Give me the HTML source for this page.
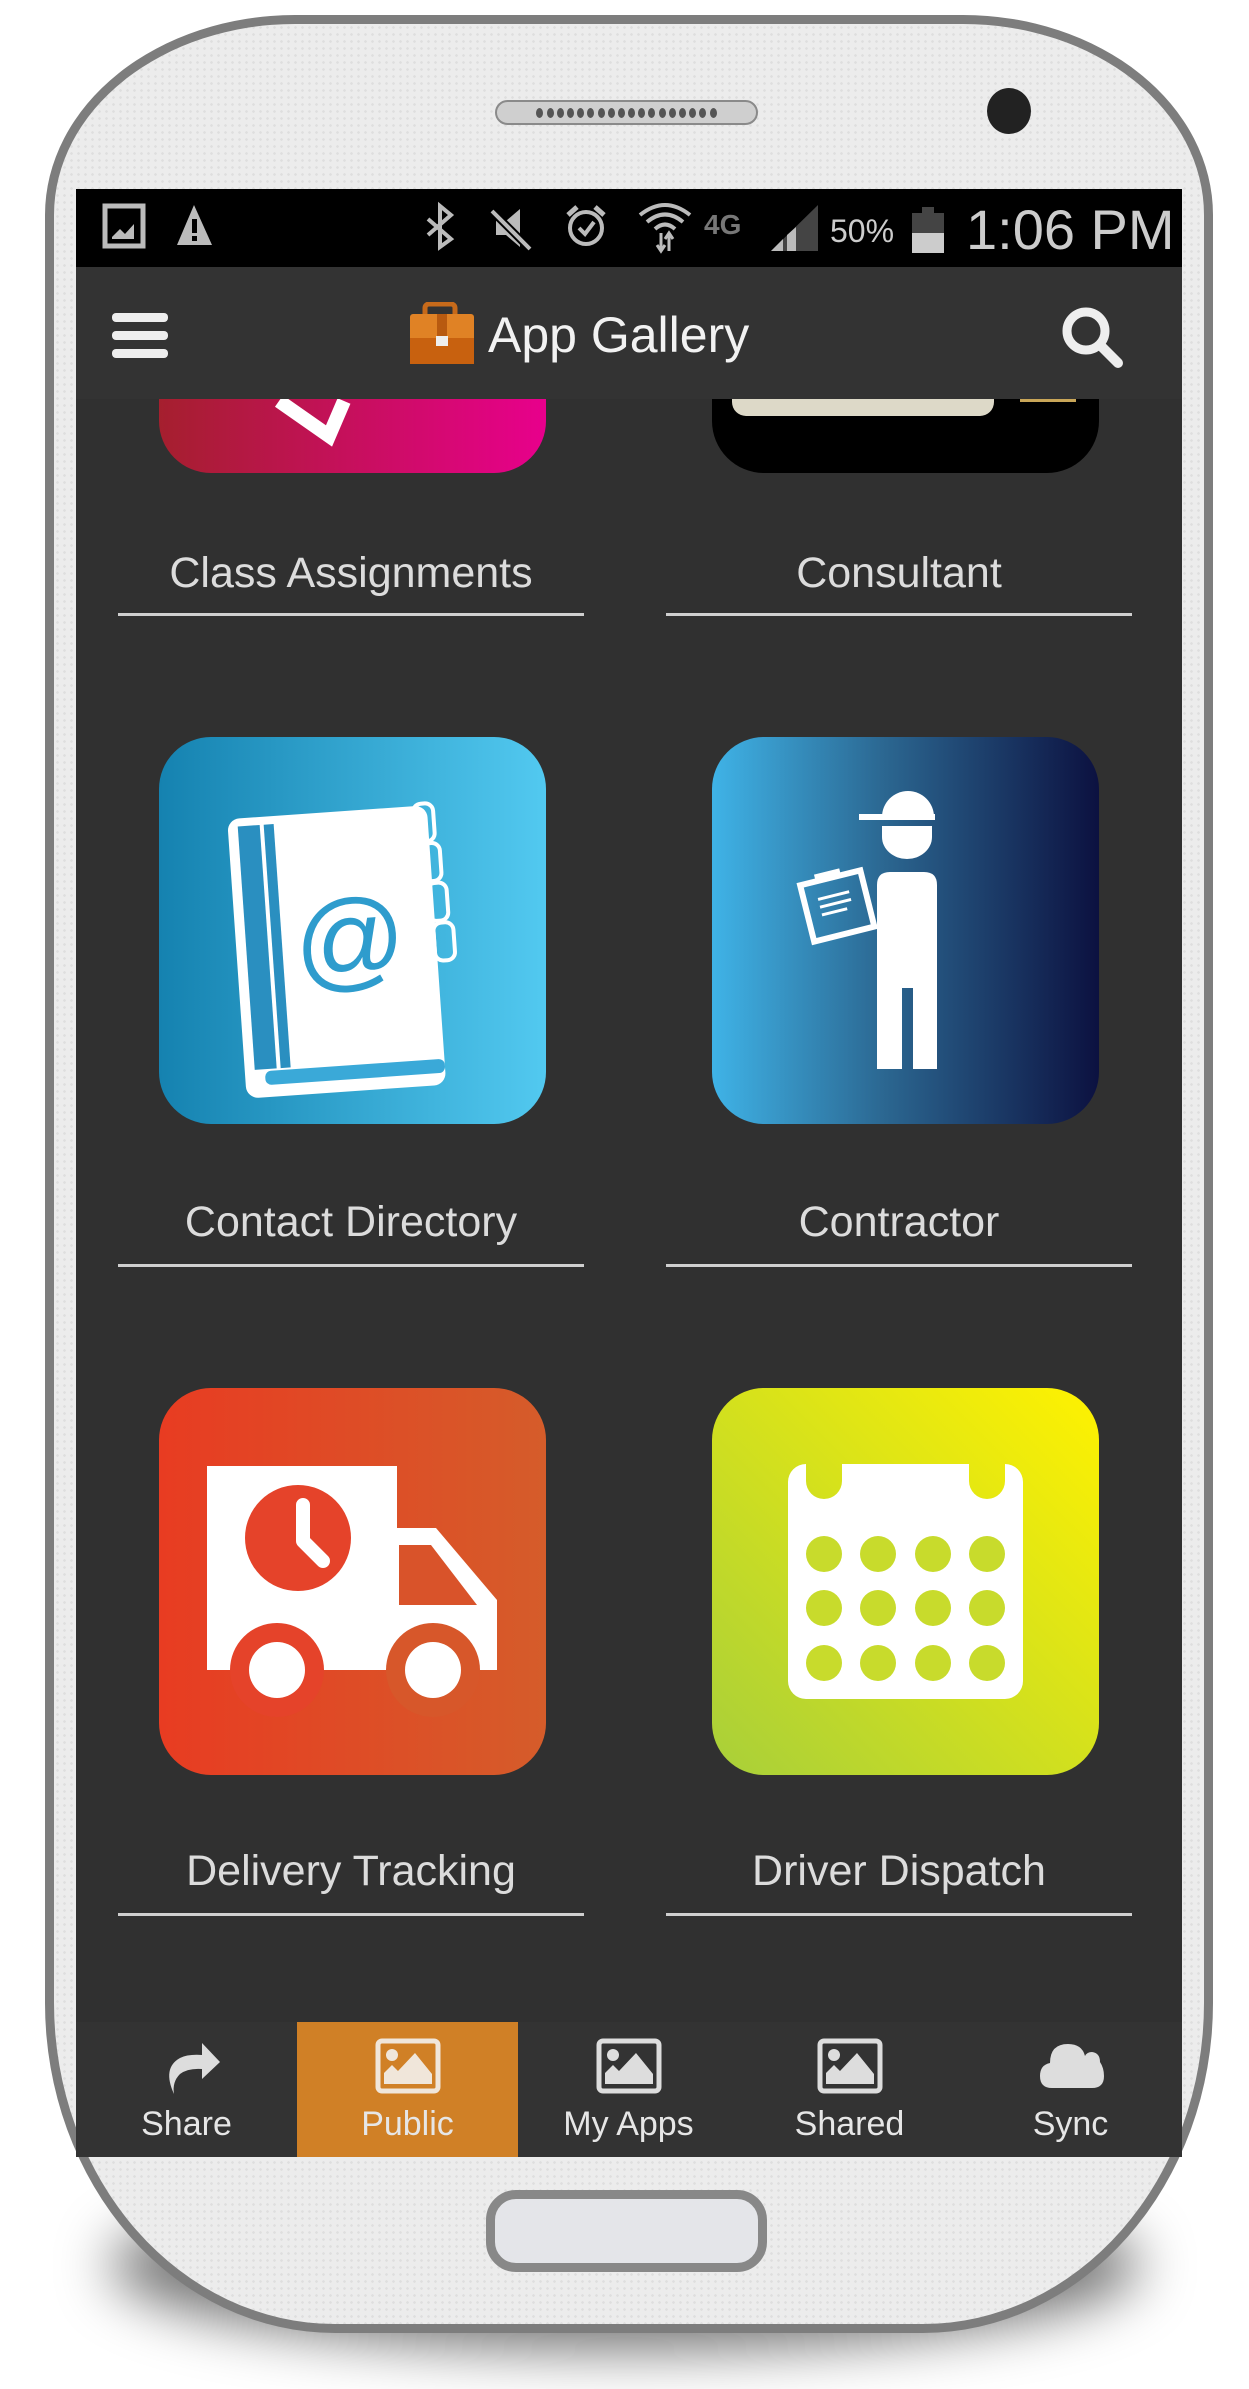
<!DOCTYPE html>
<html><head><meta charset="utf-8"><style>
*{margin:0;padding:0;box-sizing:border-box}
html,body{width:1249px;height:2389px;background:#fff;overflow:hidden;font-family:"Liberation Sans",sans-serif}
.shadow{position:absolute;left:110px;top:2180px;width:1030px;height:170px;border-radius:50%;background:rgba(0,0,0,.55);filter:blur(28px)}
.phone{position:absolute;left:45px;top:15px;width:1168px;height:2318px;border:9px solid #7d7d7d;background:#ececec;
border-radius:250px 250px 290px 290px / 200px 200px 330px 330px;
background-image:radial-gradient(#dedede 1.2px,transparent 1.4px);background-size:7px 7px}
.speaker{position:absolute;left:495px;top:100px;width:263px;height:25px;border-radius:13px;background:#cfcfcf;border:2px solid #8a8a8a;display:flex;align-items:center;justify-content:center;gap:3.2px}
.speaker i{display:block;width:7px;height:10px;border-radius:50%;background:#555}
.cam{position:absolute;left:987px;top:88px;width:44px;height:46px;border-radius:50%;background:#222}
.screen{position:absolute;left:76px;top:189px;width:1106px;height:1968px;background:#303030;overflow:hidden}
.status{position:absolute;left:0;top:0;width:100%;height:78px;background:#000}
.appbar{position:absolute;left:0;top:78px;width:100%;height:132px;background:#333}
.title{position:absolute;left:412px;top:38px;color:#f2f2f2;font-size:50px;line-height:60px}
.content{position:absolute;left:0;top:210px;width:100%;height:1623px;overflow:hidden}
.icon{position:absolute;width:387px;height:387px;border-radius:52px;overflow:hidden}
.lbl{position:absolute;width:466px;text-align:center;color:#dcdcdc;font-size:43px;line-height:50px}
.line{position:absolute;width:466px;height:3px;background:#cfcfcf}
.nav{position:absolute;left:0;top:1833px;width:100%;height:135px;background:#333}
.tab{position:absolute;top:0;width:221px;height:135px;color:#e6e6e6;font-size:34px;text-align:center}
.tab span{position:absolute;left:0;right:0;top:82px;line-height:40px}
.tab svg{position:absolute;left:78px;top:16px}
.home{position:absolute;left:486px;top:2190px;width:281px;height:82px;border:9px solid #888;border-radius:30px;background:#e4e5e9}
</style></head><body>
<div class="shadow"></div>
<div class="phone"></div>
<div class="speaker"><i></i><i></i><i></i><i></i><i></i><i></i><i></i><i></i><i></i><i></i><i></i><i></i><i></i><i></i><i></i><i></i><i></i><i></i></div>
<div class="cam"></div>
<div class="home"></div>

<div class="screen">
 <div class="status">
  <svg width="1106" height="78" style="position:absolute;left:0;top:0">
   <rect x="29" y="17" width="38" height="40" fill="none" stroke="#bbb" stroke-width="5"/>
   <path d="M36 48 L44 40 L49 45 L58 35 V50 H36Z" fill="#bbb"/>
   <path d="M101 56 L118 16 L136 56Z" fill="#bbb"/><rect x="116" y="30" width="5" height="14" fill="#000"/><rect x="116" y="47" width="5" height="5" fill="#000"/>
   <path d="M352 30 L375 50 L364 58 V17 L375 26 L352 46" fill="none" stroke="#bbb" stroke-width="4"/>
   <path d="M420 32 H430 L444 20 V58 L430 46 H420Z" fill="#bbb"/><path d="M416 22 L454 60" stroke="#000" stroke-width="8"/><path d="M416 22 L454 60" stroke="#bbb" stroke-width="4"/>
   <circle cx="510" cy="39" r="16" fill="none" stroke="#bbb" stroke-width="4"/><path d="M503 39 L509 45 L518 33" fill="none" stroke="#bbb" stroke-width="4"/><path d="M492 26 L501 18 M528 26 L519 18" stroke="#bbb" stroke-width="5"/>
   <path d="M564 26 Q589 6 614 26 M571 33 Q589 18 607 33 M579 40 Q589 31 599 40" fill="none" stroke="#bbb" stroke-width="4"/><path d="M585 44 V62 M581 56 L585 62 L589 56 M593 62 V44 M589 50 L593 44 L597 50" stroke="#bbb" stroke-width="3" fill="none"/>
   <text x="628" y="45" font-size="28" font-weight="bold" fill="#777">4G</text>
   <path d="M695 62 L742 16 V62Z" fill="#444"/><path d="M695 62 L707 50 V62Z M711 62 V46 L720 38 V62Z" fill="#bbb"/>
   <text x="754" y="53" font-size="32" fill="#ccc">50%</text>
   <rect x="836" y="24" width="32" height="40" fill="#444"/><rect x="846" y="18" width="12" height="6" fill="#444"/><rect x="836" y="44" width="32" height="20" fill="#ccc"/>
   <text x="890" y="60" font-size="56" fill="#ccc">1:06 PM</text>
  </svg>
 </div>
 <div class="appbar">
  <svg width="60" height="50" style="position:absolute;left:34px;top:44px"><rect x="2" y="2" width="56" height="9" rx="4" fill="#eee"/><rect x="2" y="20" width="56" height="9" rx="4" fill="#eee"/><rect x="2" y="38" width="56" height="9" rx="4" fill="#eee"/></svg>
  <svg width="66" height="62" style="position:absolute;left:333px;top:35px"><rect x="16" y="2" width="30" height="14" rx="4" fill="none" stroke="#c76a1a" stroke-width="5"/><rect x="1" y="12" width="64" height="50" rx="3" fill="#e08225"/><rect x="1" y="36" width="64" height="26" fill="#c8610f"/><rect x="28" y="12" width="10" height="26" fill="#b85a10"/><rect x="27" y="34" width="12" height="10" fill="#eee"/></svg>
  <div class="title">App Gallery</div>
  <svg width="66" height="66" style="position:absolute;left:984px;top:38px"><circle cx="26" cy="26" r="19" fill="none" stroke="#eee" stroke-width="9"/><path d="M40 40 L58 58" stroke="#eee" stroke-width="10" stroke-linecap="round"/></svg>
 </div>

 <div class="content">
 <div class="icon" style="left:83px;top:-313px;background:linear-gradient(90deg,#a51f2e,#e8008c)">
  <svg width="387" height="387" style="position:absolute"><path d="M120 315 L170 350 L185 315" fill="none" stroke="#fff" stroke-width="14"/></svg>
 </div>
 <div class="icon" style="left:636px;top:-313px;background:#000">
  <svg width="387" height="387" style="position:absolute"><rect x="20" y="250" width="262" height="80" rx="14" fill="#ddd9c8"/><rect x="40" y="250" width="220" height="8" fill="#9ec4dc"/><rect x="308" y="250" width="56" height="66" fill="#c9a658"/></svg>
 </div>
 <div class="lbl" style="left:42px;top:149px">Class Assignments</div>
 <div class="line" style="left:42px;top:214px"></div>
 <div class="lbl" style="left:590px;top:149px">Consultant</div>
 <div class="line" style="left:590px;top:214px"></div>

 <div class="icon" style="left:83px;top:338px;background:linear-gradient(90deg,#1582b0,#52c9f0)">
  <svg width="387" height="387" style="position:absolute">
   <g transform="rotate(-4 190 190)">
    <rect x="262" y="72" width="20" height="38" rx="8" fill="none" stroke="#fff" stroke-width="4"/>
    <rect x="266" y="112" width="20" height="38" rx="8" fill="none" stroke="#fff" stroke-width="4"/>
    <rect x="270" y="152" width="20" height="38" rx="8" fill="none" stroke="#fff" stroke-width="4"/>
    <rect x="274" y="192" width="20" height="38" rx="8" fill="none" stroke="#fff" stroke-width="4"/>
    <rect x="76" y="74" width="200" height="280" rx="12" fill="#fff"/>
    <rect x="86" y="82" width="22" height="244" fill="#2a8fc0"/>
    <rect x="112" y="82" width="10" height="244" fill="#2a8fc0"/>
    <rect x="96" y="328" width="180" height="14" rx="6" fill="#3aa9d8"/>
    <text x="190" y="240" font-size="110" fill="#2e9ccd" text-anchor="middle">@</text>
   </g>
  </svg>
 </div>
 <div class="icon" style="left:636px;top:338px;background:linear-gradient(90deg,#3fb3e7,#2b6690 45%,#0c1140)">
  <svg width="387" height="387" style="position:absolute">
   <path d="M170 80 A26 26 0 0 1 222 80Z" fill="#fff"/><rect x="147" y="77" width="76" height="6" fill="#fff"/>
   <path d="M170 89 H220 V100 A25 22 0 0 1 170 100Z" fill="#fff"/>
   <path d="M165 148 Q165 135 178 135 H212 Q225 135 225 148 V332 H201 V251 H190 V332 H165Z" fill="#fff"/>
   <g transform="rotate(-14 125 168)"><rect x="94" y="140" width="62" height="58" fill="none" stroke="#fff" stroke-width="6"/><rect x="110" y="133" width="26" height="8" fill="#fff"/><path d="M108 158 H140 M108 166 H140 M108 174 H134" stroke="#fff" stroke-width="3"/></g>
  </svg>
 </div>
 <div class="lbl" style="left:42px;top:798px">Contact Directory</div>
 <div class="line" style="left:42px;top:865px"></div>
 <div class="lbl" style="left:590px;top:798px">Contractor</div>
 <div class="line" style="left:590px;top:865px"></div>

 <div class="icon" style="left:83px;top:989px;background:linear-gradient(90deg,#e83c22,#d55c2a)">
  <svg width="387" height="387" style="position:absolute">
   <rect x="48" y="78" width="190" height="204" fill="#fff"/>
   <path d="M238 140 H277 L338 212 V282 H238Z" fill="#fff"/>
   <path d="M240 157 H272 L318 217 H240Z" fill="#d9532a"/>
   <circle cx="118" cy="282" r="47" fill="#e5432a"/><circle cx="274" cy="282" r="47" fill="#d7572a"/>
   <circle cx="118" cy="282" r="28" fill="#fff"/><circle cx="274" cy="282" r="28" fill="#fff"/>
   <circle cx="139" cy="150" r="53" fill="#e5432a"/>
   <path d="M144 117 V153 L164 173" fill="none" stroke="#fff" stroke-width="14" stroke-linecap="round" stroke-linejoin="round"/>
  </svg>
 </div>
 <div class="icon" style="left:636px;top:989px;background:linear-gradient(45deg,#a8cf3a,#fff200)">
  <svg width="387" height="387" style="position:absolute">
   <path d="M94 76 V93 A18 18 0 0 0 130 93 V76 H257 V93 A18 18 0 0 0 293 93 V76 A18 18 0 0 1 311 94 V293 A18 18 0 0 1 293 311 H94 A18 18 0 0 1 76 293 V94 A18 18 0 0 1 94 76Z" fill="#fff"/>
   <g fill="#c8db2c">
    <circle cx="112" cy="166" r="18"/><circle cx="166" cy="166" r="18"/><circle cx="221" cy="166" r="18"/><circle cx="275" cy="166" r="18"/>
    <circle cx="112" cy="220" r="18"/><circle cx="166" cy="220" r="18"/><circle cx="221" cy="220" r="18"/><circle cx="275" cy="220" r="18"/>
    <circle cx="112" cy="275" r="18"/><circle cx="166" cy="275" r="18"/><circle cx="221" cy="275" r="18"/><circle cx="275" cy="275" r="18"/>
   </g>
  </svg>
 </div>
 <div class="lbl" style="left:42px;top:1447px">Delivery Tracking</div>
 <div class="line" style="left:42px;top:1514px"></div>
 <div class="lbl" style="left:590px;top:1447px">Driver Dispatch</div>
 <div class="line" style="left:590px;top:1514px"></div>
 </div>

 <div class="nav">
  <div class="tab" style="left:0">
   <svg width="66" height="58"><path d="M20 56 Q8 30 26 20 Q34 16 48 17 V5 L66 24 L48 41 V31 Q34 30 26 36 Q18 44 20 56Z" fill="#ddd"/></svg>
   <span>Share</span></div>
  <div class="tab" style="left:221px;background:#d08026">
   <svg width="66" height="56"><rect x="3" y="3" width="60" height="50" rx="4" fill="none" stroke="#f0e6da" stroke-width="5"/><circle cx="17" cy="17" r="6" fill="#f0e6da"/><path d="M9 46 V35 L17 27 L23 33 L40 15 L57 36 V46Z" fill="#f0e6da"/></svg>
   <span>Public</span></div>
  <div class="tab" style="left:442px">
   <svg width="66" height="56"><rect x="3" y="3" width="60" height="50" rx="4" fill="none" stroke="#ddd" stroke-width="5"/><circle cx="17" cy="17" r="6" fill="#ddd"/><path d="M9 46 V35 L17 27 L23 33 L40 15 L57 36 V46Z" fill="#ddd"/></svg>
   <span>My Apps</span></div>
  <div class="tab" style="left:663px">
   <svg width="66" height="56"><rect x="3" y="3" width="60" height="50" rx="4" fill="none" stroke="#ddd" stroke-width="5"/><circle cx="17" cy="17" r="6" fill="#ddd"/><path d="M9 46 V35 L17 27 L23 33 L40 15 L57 36 V46Z" fill="#ddd"/></svg>
   <span>Shared</span></div>
  <div class="tab" style="left:884px">
   <svg width="66" height="56"><path d="M14 50 Q2 50 2 38 Q2 27 12 25 Q12 6 30 6 Q44 6 47 18 Q49 14 54 14 Q62 15 62 24 Q66 30 66 38 Q66 50 54 50Z" fill="#ddd"/></svg>
   <span>Sync</span></div>
 </div>
</div>
</body></html>
